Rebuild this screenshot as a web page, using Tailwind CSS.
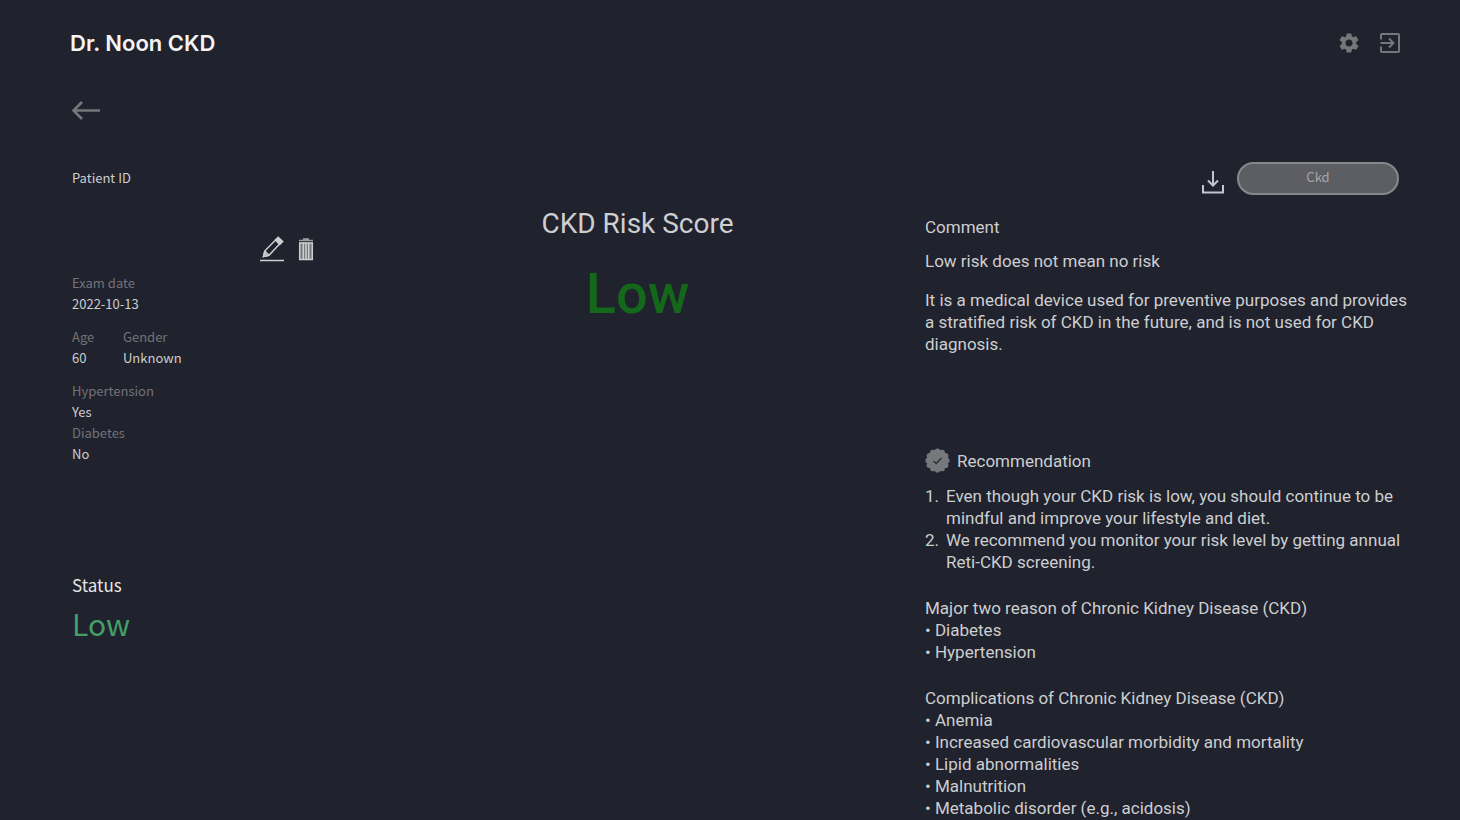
<!DOCTYPE html>
<html lang="en">
<head>
  <meta charset="UTF-8">
  <meta name="viewport" content="width=device-width, initial-scale=1.0">
  <title>Dr. Noon CKD</title>
  <script src="https://cdn.jsdelivr.net/npm/@tailwindcss/browser@4"></script>
</head>
<body class="min-h-screen bg-[#20222d] font-['Roboto',sans-serif] text-[#cdced0]">
  <header class="flex items-center justify-between pt-7 pl-[70px] pr-[58px]">
    <h1 class="font-['Inter',sans-serif] text-[22px] leading-[30px] font-semibold text-[#f4f4f4]">Dr. Noon CKD</h1>
    <div class="flex gap-[17px] text-[#76777a]">
      <button type="button" aria-label="Settings">
        <svg class="size-6" viewBox="0 0 24 24" fill="currentColor"><path d="M19.14 12.94c.04-.3.06-.61.06-.94 0-.32-.02-.64-.07-.94l2.03-1.58c.18-.14.23-.41.12-.61l-1.92-3.32c-.12-.22-.37-.29-.59-.22l-2.39.96c-.5-.38-1.03-.7-1.62-.94l-.36-2.54c-.04-.24-.24-.41-.48-.41h-3.84c-.24 0-.43.17-.47.41l-.36 2.54c-.59.24-1.13.57-1.62.94l-2.39-.96c-.22-.08-.47 0-.59.22L2.74 8.87c-.12.21-.08.47.12.61l2.03 1.58c-.05.3-.09.63-.09.94s.02.64.07.94l-2.03 1.58c-.18.14-.23.41-.12.61l1.92 3.32c.12.22.37.29.59.22l2.39-.96c.5.38 1.03.7 1.62.94l.36 2.54c.05.24.24.41.48.41h3.84c.24 0 .44-.17.47-.41l.36-2.54c.59-.24 1.13-.56 1.62-.94l2.39.96c.22.08.47 0 .59-.22l1.92-3.32c.12-.22.07-.47-.12-.61l-2.01-1.58zM12 15.6c-1.98 0-3.6-1.62-3.6-3.6s1.62-3.6 3.6-3.6 3.6 1.62 3.6 3.6-1.62 3.6-3.6 3.6z"/></svg>
      </button>
      <button type="button" aria-label="Log out">
        <svg class="size-6" viewBox="0 0 24 24" fill="none" stroke="currentColor" stroke-width="2"><path d="M3 8.500V4a1 1 0 0 1 1-1h16a1 1 0 0 1 1 1v16a1 1 0 0 1-1 1H4a1 1 0 0 1-1-1v-4.500M2.500 12H15M11 7.500l4.500 4.500-4.500 4.500"/></svg>
      </button>
    </div>
  </header>

  <nav class="pt-10 pl-[71px]">
    <a href="#" aria-label="Back" class="block w-[30px] text-[#76777a]">
      <svg class="h-6 w-[30px]" viewBox="0 0 30 24" fill="none" stroke="currentColor" stroke-width="2.600"><path d="M29 12.500H2.500M11 4l-8.500 8.500L11 21"/></svg>
    </a>
  </nav>

  <main class="flex pt-10 pl-[72px] pr-[47px]">
    <!-- patient info -->
    <aside class="w-[278px] shrink-0 pt-[5px] font-['Noto_Sans_CJK_KR',sans-serif] text-[13px] leading-[21px]">
      <h2>Patient ID</h2>
      <div class="mt-12 mb-2.5 flex justify-end gap-3 pr-9">
        <button type="button" aria-label="Edit">
          <svg class="size-[26px]" viewBox="0 0 26 26" fill="none" stroke="currentColor" stroke-width="1.500"><path d="M0 24.500h24"/><path d="M3.500 20.500l1.200-5.500L16.500 3l4 4L9 19.200z"/><path d="M4.700 15l4.300 4.200M3.500 20.500l1-3.500 2.500 2.700z"/><path fill="currentColor" d="M15.500 4l2.700-2.700 4.500 4.200-3 3z"/></svg>
        </button>
        <button type="button" aria-label="Delete">
          <svg class="h-[26px] w-4" viewBox="0 0 16 26" fill="none"><path fill="#77787e" d="M1 6.500h14V24H1z"/><path stroke="#9d9ea1" stroke-width="1.500" d="M1 4.500h14M5 3h6"/><path stroke="currentColor" stroke-width="1.500" d="M1.700 6.500V24M5.300 6.500V24M8 6.500V24M10.700 6.500V24M14.300 6.500V24M1 23.400h14M1 7h14"/></svg>
        </button>
      </div>
      <dl>
        <dt class="text-[#727378]">Exam date</dt>
        <dd>2022-10-13</dd>
      </dl>
      <div class="mt-3 flex">
        <dl class="w-[51px]">
          <dt class="text-[#727378]">Age</dt>
          <dd>60</dd>
        </dl>
        <dl>
          <dt class="text-[#727378]">Gender</dt>
          <dd>Unknown</dd>
        </dl>
      </div>
      <dl class="mt-3">
        <dt class="text-[#727378]">Hypertension</dt>
        <dd>Yes</dd>
        <dt class="text-[#727378]">Diabetes</dt>
        <dd>No</dd>
      </dl>
      <h2 class="mt-[109px] text-[17px] leading-6 text-[#e4e4e5]">Status</h2>
      <p class="mt-1 text-[30px] leading-[44px] text-[#43a068]">Low</p>
    </aside>

    <!-- score -->
    <section class="min-w-0 flex-1 pt-[42px] text-center">
      <h2 class="text-[28px] leading-10">CKD Risk Score</h2>
      <p class="mt-[18px] text-[56px] leading-[64px] font-medium text-[#14681a]">Low</p>
    </section>

    <!-- report -->
    <section class="w-[488px] shrink-0 text-[17px] leading-[22px]">
      <div class="flex justify-end gap-3 pr-3.5">
        <button type="button" aria-label="Download" class="pt-1.5">
          <svg class="size-6" viewBox="0 0 24 24" fill="none" stroke="#c3c5d2" stroke-width="2"><path d="M12 1v14M7 10.500l5 5 5-5M2 15v7.500h20V15"/></svg>
        </button>
        <button type="button" class="h-[33px] w-[162px] rounded-full border-2 border-[#88888b] bg-[#5d5d64] pb-1 font-['Noto_Sans_CJK_KR',sans-serif] text-[13px] leading-5 text-[#a6a6a9]">Ckd</button>
      </div>
      <h2 class="mt-[21px]">Comment</h2>
      <p class="mt-3">Low risk does not mean no risk</p>
      <p class="mt-[17px]">It is a medical device used for preventive purposes and provides a stratified risk of CKD in the future, and is not used for CKD diagnosis.</p>

      <div class="mt-[93px] flex items-center gap-[7px]">
        <svg class="size-[25px]" viewBox="0 0 25 25" fill="none"><circle cx="12.500" cy="12.500" r="10.500" fill="#77787c"/><circle cx="12.500" cy="12.500" r="9.300" pathLength="12" stroke="#77787c" stroke-width="5.600" stroke-linecap="round" stroke-dasharray="0 1"/><path stroke="#2b2d37" stroke-width="1.400" d="M8.500 13l2.700 2.500 5.300-5.500"/></svg>
        <h2>Recommendation</h2>
      </div>
      <ol class="mt-3">
        <li class="flex"><span class="w-[21px] shrink-0">1.</span>Even though your CKD risk is low, you should continue to be mindful and improve your lifestyle and diet.</li>
        <li class="flex"><span class="w-[21px] shrink-0">2.</span>We recommend you monitor your risk level by getting annual Reti-CKD screening.</li>
      </ol>
      <h3 class="mt-6">Major two reason of Chronic Kidney Disease (CKD)</h3>
      <ul>
        <li>• Diabetes</li>
        <li>• Hypertension</li>
      </ul>
      <h3 class="mt-6">Complications of Chronic Kidney Disease (CKD)</h3>
      <ul>
        <li>• Anemia</li>
        <li>• Increased cardiovascular morbidity and mortality</li>
        <li>• Lipid abnormalities</li>
        <li>• Malnutrition</li>
        <li>• Metabolic disorder (e.g., acidosis)</li>
      </ul>
    </section>
  </main>
</body>
</html>
